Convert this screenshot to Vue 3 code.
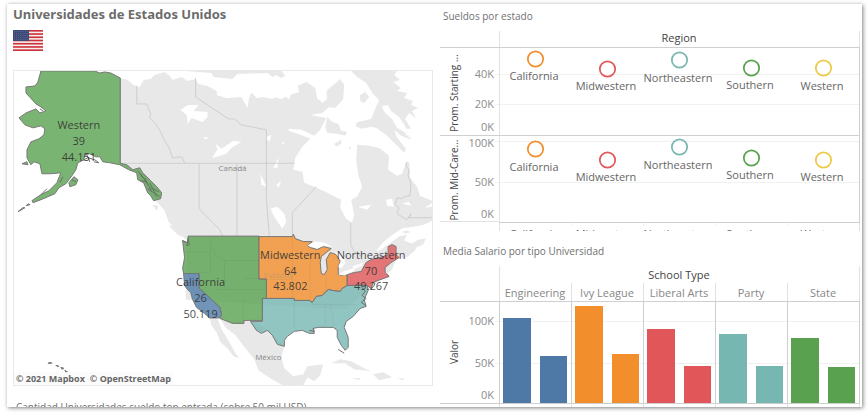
<script setup>
const regions = [
  { name: 'California', color: '#f28e2b', start: [59, 80], mid: [149, 171] },
  { name: 'Midwestern', color: '#e15759', start: [69, 90], mid: [160, 181] },
  { name: 'Northeastern', color: '#76b7b2', start: [60, 82], mid: [147, 169] },
  { name: 'Southern', color: '#59a14f', start: [68, 89], mid: [158, 179] },
  { name: 'Western', color: '#edc948', start: [68, 90], mid: [160, 181] },
]

const schools = [
  { name: 'Engineering', color: '#4e79a7', values: [102.5, 57] },
  { name: 'Ivy League', color: '#f28e2b', values: [118, 59.5] },
  { name: 'Liberal Arts', color: '#e15759', values: [89, 45] },
  { name: 'Party', color: '#76b7b2', values: [84, 45] },
  { name: 'State', color: '#59a14f', values: [79, 43] },
]

const mapLabels = [
  { x: 78, y: 129, step: 16, rows: ['Western', '39', '44.151'] },
  { x: 200, y: 287, step: 16, rows: ['California', '26', '50.119'] },
  { x: 290, y: 259, step: 16, rows: ['Midwestern', '64', '43.802'] },
  { x: 371, y: 259, step: 16, rows: ['Northeastern', '70', '49.267'] },
]

const colX = (i) => 500 + i * 72
const barHeight = (v) => Math.round(v * 0.826)
const stripes = [0, 2, 4, 6, 8, 10, 12]
</script>

<template>
  <main class="dashboard">
    <section class="column">
      <h1>Universidades de Estados Unidos</h1>
      <svg class="flag" viewBox="0 0 60 42" role="img" aria-label="Estados Unidos">
        <rect width="60" height="42" fill="#f8eeee" />
        <rect v-for="s in stripes" :key="s" x="0" :y="s * 3.23" width="60" height="3.23" fill="#cc3038" />
        <rect width="32" height="22" fill="#3c4a78" />
        <g fill="#8089ab">
          <template v-for="r in 5" :key="r">
            <circle v-for="c in 7" :key="c" :cx="c * 4.2 - 1" :cy="r * 4 - 1" r="0.8" />
          </template>
        </g>
      </svg>

      <figure class="map">
        <svg viewBox="13 71 419 315" role="img" aria-label="Mapa de universidades por región">
          <rect x="13" y="71" width="419" height="315" fill="#fff" />
          <g class="land">
            <path d="M119 78 L127 80 L133 85 L139 87 L143 80 L150 79 L154 75 L164 72 L169 76 L172 80 L181 77 L187 81 L195 79 L198 84 L207 86 L216 91 L217 95 L226 98 L238 96 L246 94 L247 102 L251 92 L256 98 L270 96 L281 99 L289 95 L299 92 L297 86 L306 82 L315 88 L317 99 L323 102 L327 90 L338 81 L341 73 L351 71 L397 71 L394 75 L400 80 L393 82 L401 88 L397 91 L407 93 L404 98 L413 101 L411 105 L418 108 L412 111 L416 118 L409 113 L405 119 L411 129 L406 129 L411 140 L401 136 L394 130 L397 138 L406 149 L404 153 L396 145 L387 136 L376 128 L361 125 L354 141 L367 145 L381 149 L391 153 L389 169 L398 175 L404 164 L409 162 L410 178 L417 187 L420 196 L432 201 L432 222 L421 226 L402 229 L393 235 L384 242 L376 253 L387 246 L399 237 L407 235 L404 241 L412 244 L420 239 L415 251 L405 259 L397 258 L392 270 L345 310 L185 300 L187 240 L184 239 L175 230 L168 222 L164 211 L157 203 L149 195 L136 174 L119 164Z" />
            <path d="M185 71 H281 L285 76 L276 80 L267 73 L237 74 L232 79 L213 77 L211 73Z" />
            <path d="M209 318 L217 319 L221 330 L229 343 L235 354 L239 359 L233 357 L227 349 L220 343 L216 333 L211 326Z" />
            <path d="M219 318 L232 323 L244 321 L255 323 L268 331 L284 347 L281 358 L284 369 L293 377 L303 375 L307 367 L323 365 L320 376 L314 382 L307 378 L303 386 L282 386 L270 379 L258 371 L254 360 L244 348 L235 336 L225 328Z" />
            <path d="M331 364 L340 360 L351 362 L366 370 L371 372 L354 370 L345 364Z M373 375 L383 373 L392 378 L379 381Z M352 379 L360 379 L359 381Z M397 379 L404 379 L403 381Z" />
            <path d="M152 205 L158 206 L156 211Z M168 226 L178 227 L186 238 L178 236Z" />
            <path d="M418 239 L426 239 L423 245 L414 249Z" />
          </g>
          <g class="water">
            <path d="M180 110 L187 105 L198 105 L193 111 L207 112 L207 117 L202 122 L191 118 L187 124 L186 115Z" />
            <path d="M212 157 L217 150 L215 144 L221 149 L233 141 L241 142 L231 148 L226 154 L213 158Z" />
            <path d="M200 74 L214 79 L223 84 L238 91 L247 84 L256 82 L257 87 L249 95 L247 108 L241 97 L228 98 L216 95 L220 90 L208 83 L198 79Z" />
            <path d="M258 96 L265 90 L272 87 L268 79 L276 75 L283 80 L291 76 L287 84 L297 82 L298 89 L291 93 L289 99 L281 94 L272 99Z" />
            <path d="M303 73 L312 72 L318 77 L321 87 L326 91 L327 99 L322 103 L317 97 L317 88 L309 82Z" />
            <path d="M320 74 L331 71 L351 71 L357 77 L366 83 L373 94 L379 100 L375 109 L371 119 L358 122 L356 127 L369 127 L378 133 L387 141 L399 148 L400 155 L406 158 L405 166 L402 174 L397 176 L388 170 L389 156 L379 148 L370 146 L357 145 L356 160 L358 175 L362 187 L357 197 L351 200 L354 215 L352 223 L346 219 L340 208 L341 200 L325 192 L314 187 L304 183 L302 172 L293 170 L295 158 L302 147 L310 139 L300 135 L288 131 L289 129 L301 130 L314 136 L320 130 L326 118 L310 115 L322 113 L329 107 L335 108 L343 99 L344 84 L338 78 L330 76 L326 83Z" />
            <path d="M382 106 L388 105 L391 111 L399 117 L405 126 L410 139 L404 132 L397 128 L392 119 L384 112Z" />
            <path d="M270 209 L277 207 L284 214 L286 222 L282 229 L275 219Z M265 138 L271 135 L269 142Z M260 174 L266 187 L261 185Z M276 185 L281 181 L278 188Z M273 168 L278 158 L277 168Z M358 207 L371 205 L367 210Z M386 200 L392 199 L394 207 L387 206Z M402 204 L409 202 L411 206Z M425 208 L432 203 L432 207Z M281 143 L284 142 L283 145Z M203 137 L208 138 L205 140Z" />
            <path d="M376 251 L384 242 L393 235 L402 230 L421 227 L432 221 L432 239 L424 239 L415 241 L409 243 L405 240 L407 235 L400 236 L388 244Z" />
          </g>
          <g class="land">
            <path d="M360 95 L365 92 L369 97 L364 103 L360 101Z M327 117 L332 122 L338 124 L341 131 L347 132 L345 136 L336 134 L327 133 L325 127Z M334 144 L341 140 L341 144 L336 147Z M356 123 L363 121 L372 122 L371 127 L362 129 L356 127Z M349 147 L351 148 L350 151Z M402 232 L408 231 L410 233 L405 234Z" />
          </g>
          <g class="borders">
            <path d="M119.500 78V163.500H294 M136 86 V104 H146 L150 114 L149 118 L154 123 L159 130 L163 139 L168 147 L172 158 L181 157 L184 163 M195 78 V97 L228 119 H234 L241 125 L266 130 V200 L269 236 M198.500 164 V209 L219 230 L222 236 M236.500 164 V236 M292 236 L292 213 L316 187 M350.500 223 V245 L354 252 L362 257 M407 162 L406 166 L409 170 L408 176 L411 184 L410 196 L404 197 L402 199 L397 198 L395 205 L399 208 L397 214 L405 219 L407 220 L411 214 L409 218 L412 218 H432" />
          </g>
          <g class="place">
            <text x="232" y="171" text-anchor="middle">Canadá</text>
            <text x="268" y="361" text-anchor="middle">México</text>
          </g>
          <g class="states">
            <path fill="#59a14f" d="M40 71 H94 L99 73 L104 72 L110 73 L119.500 78 V163.500 L126 165 L132 170 L139 168 L142 173 L150 181 L156 187 L161 193 L160 199 L153 201 L150 196 L147 193 L143 183 L137 180 L136 173 L128 170 L119 165 L109 163 L102 162 L99 157 L95 157 L89 154 L84 155 L83 160 L77 163 L75 170 L71 176 L65 184 L58 188 L54 194 L47 197 L40 200 L32 203 L31 201 L40 195 L48 191 L56 183 L60 173 L50 174 L41 174 L39 164 L33 162 L30 165 L26 158 L26 150 L30 142 L38 139 L43 135 L44 129 L40 126 L32 128 L24 125 L18 118 L25 113 L35 109 L39 113 L45 111 L40 107 L35 104 L25 93 L25 87 L34 86 L37 82Z" />
            <path fill="#59a14f" d="M68 183 L73 177 L77 180 L75 185 L69 187Z M21 164 L26 162 L27 165Z M17 212 L22 208 L24 208 L19 211Z M25 206 L28 204 L29 205Z" />
            <path fill="#59a14f" d="M47 364 L50 363 L51 364Z M55 366 L58 367 L56 367Z M60 368 L63 369 L61 370Z M64 371 L67 373 L65 373Z" />
            <path class="inlets" d="M137 171 L143 179 M140 174 L147 185 M144 178 L151 192 M149 183 L156 197 M140 181 L145 182 M147 189 L159 197 M150 188 L158 192 M81 161 L87 158 L94 160 L98 163 L93 162 M86 155 L89 162 M39 109 L42 111 M46 189 L40 195 M62 177 L59 183 M71 180 L75 182" />
            <path fill="#59a14f" d="M187.500 236.500 H258.500 V279.500 H266 V299 H262 V321 H243.500 V324 H232 L219.500 319 L221 315 L219.500 308 L198.500 288.500 V274 H183 L182 269 L184 258 L182 241 L187 243Z" />
            <path fill="#4e79a7" d="M183 274 H198.500 V288.500 L219.500 308 L221 315 L219 318.500 H209 L204 314 L196 308 L192 300 L190 293 L187 290 L184 286Z" />
            <path fill="#f28e2b" d="M258.500 237 H292 L293 234.500 L295 239 L303 242 L312 242 L307 246 L310 248 L317 250 L323 247 L331 249 L326 253 L321 257 L320 263 L321 274 L324 275 L327 270 L326 260 L330 253 L336 255 L340 262 L338 267 L338 275 L343 276 L347 275 V286 L342 289 L340 292 L332 291 L328 290 L322 296 L316 297 L312 303 L309 301 H294 V299 H266 V279.500 H258.500Z" />
            <path fill="#76b7b2" d="M262 299 H294 V301 H309 L312 303 L316 297 L322 296 L328 290 L332 291 L340 292 L342 289 L347 286 H367 L368 291 L364 300 L366 307 L360 309 L353 317 L346 322 L344 328 L348 338 L348 348 L345 351 L341 346 L337 338 L337 331 L333 328 L325 328 L318 328 L313 329 L314 334 L309 334 L302 331 L294 332 L287 337 L284 341 L284 347 L277 345 L272 336 L267 331 L261 334 L256 331 L250 322 H262Z" />
            <path fill="#e15759" d="M347 286 V275 L354 273 L361 272 L366 263 L371 260 L383 257 L388 255 L388 247 L392 245 L396 247 L396 255 L399 258 L391 263 L385 268 L385 273 L389 277 L378 281 L373 283 L371 289 L366 285.500Z" />
          </g>
          <g class="water">
            <path d="M307 246 L315 242 L324 243 L333 248 L324 246 L317 249Z M334 252 L339 254 L344 259 L345 264 L341 269 L338 267 L341 261Z M338 275 L343 272 L356 268 L353 272 L344 276Z M352 267 L363 263 L361 267 L354 269Z" />
          </g>
          <path class="inlets" d="M187 240 L189 245 L186 246 L188 238 M182 241 L185 243 M361 287 L365 292 L362 296 L366 299 L361 303 L366 306 M309 331 L314 332 L313 329 M387 275 L389 277 M338 350 L344 354" />
          <g class="borders faint">
            <path d="M184 253 L195 252 L210 253 M210 237 V273 H198 M210 246 L217 258 L224 261 V290 M224 261 H258 M243 279 H258 M217 290 H262 M243 300 V321 M258 258 H288 M266 280 H292 M292 238 V300 M294 301 V330 M310 257 V300 M326 275 V293 M312 305 H355 M325 305 V327 M330 304 L334 326" />
          </g>
          <g class="place ghost">
            <text x="278" y="279" text-anchor="middle">Estados</text>
          </g>
          <g class="maplabels">
            <template v-for="l in mapLabels" :key="l.rows[0]">
              <text v-for="(row, i) in l.rows" :key="i" :x="l.x" :y="l.y + i * l.step">{{ row }}</text>
            </template>
          </g>
        </svg>
        <figcaption>
          <a href="#mapbox">© 2021 Mapbox</a>
          <a href="#osm">© OpenStreetMap</a>
        </figcaption>
      </figure>
      <h2 class="next">Cantidad Universidades sueldo top entrada (sobre 50 mil USD)</h2>
    </section>

    <section class="column">
      <h2>Sueldos por estado</h2>
      <svg class="chart" viewBox="440 31 420 200" role="img" aria-label="Sueldos por estado">
        <path class="grid" d="M495 74.500H860 M495 104.500H860 M495 141.500H860 M495 182.500H860" />
        <path class="axis light" d="M499.500 31V231 M859.500 31V231 M440 221.500H499" />
        <path class="axis" d="M440 47.500H860 M440 135.500H860 M499 222.500H860 M859.500 47V222" />
        <path class="grid" d="M571.500 223V226 M643.500 223V226 M715.500 223V226 M787.500 223V226" />
        <text class="heading" x="679" y="42">Region</text>
        <g class="ticks">
          <text x="494" y="78">40K</text>
          <text x="494" y="108">20K</text>
          <text x="494" y="131">0K</text>
          <text x="494" y="147">100K</text>
          <text x="494" y="186">50K</text>
          <text x="494" y="218">0K</text>
        </g>
        <text class="title" transform="translate(458 93) rotate(-90)">Prom. Starting ...</text>
        <text class="title" transform="translate(458 180) rotate(-90)">Prom. Mid-Care...</text>
        <g v-for="(r, i) in regions" :key="r.name">
          <circle class="mark" :cx="colX(i) + 35.5" :cy="r.start[0]" r="7.700" :stroke="r.color" />
          <circle class="mark" :cx="colX(i) + 35.5" :cy="r.mid[0]" r="7.700" :stroke="r.color" />
          <text class="label" :x="colX(i) + 34" :y="r.start[1]">{{ r.name }}</text>
          <text class="label" :x="colX(i) + 34" :y="r.mid[1]">{{ r.name }}</text>
          <text class="label" :x="colX(i) + 34" y="238">{{ r.name }}</text>
        </g>
      </svg>

      <h2 class="second">Media Salario por tipo Universidad</h2>
      <svg class="chart" viewBox="440 266 420 141" role="img" aria-label="Media salario por tipo de universidad">
        <path class="grid" d="M495 321.500H860 M495 363.500H860" />
        <path class="axis light" d="M499.500 266V407 M859.500 266V407 M571.500 283V407 M643.500 283V407 M715.500 283V407 M787.500 283V407" />
        <path class="axis" d="M440 301.500H860 M499.500 301V403 M571.500 301V403 M643.500 301V403 M715.500 301V403 M787.500 301V403 M859.500 301V403" />
        <text class="heading" x="679" y="279">School Type</text>
        <g class="ticks">
          <text x="494" y="325">100K</text>
          <text x="494" y="367">50K</text>
          <text x="494" y="399">0K</text>
        </g>
        <text class="title" transform="translate(458 352) rotate(-90)">Valor</text>
        <g v-for="(s, i) in schools" :key="s.name">
          <text class="type" :x="colX(i) + 35" y="297">{{ s.name }}</text>
          <rect :x="colX(i) + 3" :y="403 - barHeight(s.values[0])" width="28" :height="barHeight(s.values[0])" :fill="s.color" />
          <rect :x="colX(i) + 40" :y="403 - barHeight(s.values[1])" width="27" :height="barHeight(s.values[1])" :fill="s.color" />
        </g>
        <path class="axis" d="M440 403.500H860" />
      </svg>
    </section>
  </main>
</template>

<style>
body {
  background: #fff;
}
</style>

<style scoped>
.dashboard {
  box-sizing: border-box;
  display: grid;
  grid-template-columns: minmax(0, 1fr) minmax(0, 1fr);
  gap: 7px;
  height: calc(100vh - 11px);
  margin: 4px 6px 7px 7px;
  padding: 0 2px 0 6px;
  overflow: hidden;
  background: #fff;
  box-shadow: 1px 1px 4px rgba(0, 0, 0, 0.5);
  font-family: "Open Sans", "Noto Sans", sans-serif;
  color: #666;
}

.column {
  display: flex;
  flex-direction: column;
  min-width: 0;
}

h1 {
  margin: 0;
  font-family: "Noto Sans", sans-serif;
  font-size: 13px;
  line-height: 20px;
  font-weight: 700;
  color: #6c6c6c;
}

.flag {
  display: block;
  width: 30px;
  height: 21px;
  margin-top: 6px;
}

.map {
  position: relative;
  margin: 19px 0 0;
  border: 1px solid #e9e9e9;
}

.map svg,
.chart {
  display: block;
  width: 100%;
}

.land {
  fill: #e8e8e8;
}

.water {
  fill: #fff;
}

.borders {
  fill: none;
  stroke: #c8c8c8;
  stroke-width: 0.8px;
}

.faint {
  stroke: #555;
  opacity: 0.1;
}

.place {
  font-size: 8px;
  fill: #888;
}

.ghost {
  opacity: 0.3;
}

.states path {
  fill-opacity: 0.8;
  stroke: #777;
  stroke-width: 1px;
}

.states .inlets,
.inlets {
  fill: none;
  stroke: #68706a;
  stroke-width: 1px;
}

.maplabels text {
  font-size: 11px;
  text-anchor: middle;
  fill: #333;
  fill-opacity: 0.9;
}

figcaption {
  position: absolute;
  left: 0;
  bottom: 0;
  display: flex;
  gap: 5px;
  padding: 0 2px;
  background: rgba(250, 250, 250, 0.8);
  font-size: 9px;
  line-height: 13px;
  font-weight: 700;
}

figcaption a {
  color: #666;
  text-decoration: none;
}

h2 {
  margin: 4px 0 0 3px;
  font-size: 10px;
  line-height: 16px;
  font-weight: 400;
  color: #707070;
}

.chart {
  margin-top: 7px;
}

h2.second {
  margin-top: 12px;
}

h2.next {
  margin-top: 13px;
}

.grid,
.axis {
  fill: none;
  stroke: #f1f1f1;
}

.axis {
  stroke: #cfcfcf;
}

.light {
  stroke: #e2e2e2;
}

.mark {
  fill: none;
  stroke-width: 1.700px;
}

.chart text {
  font-size: 11px;
  text-anchor: middle;
  fill: #666;
}

.chart .ticks text {
  text-anchor: end;
  fill: #8c8c8c;
}

.chart .heading,
.chart .title {
  fill: #444;
}

.chart .title {
  font-size: 10px;
}

.chart .type {
  fill: #888;
}
</style>
